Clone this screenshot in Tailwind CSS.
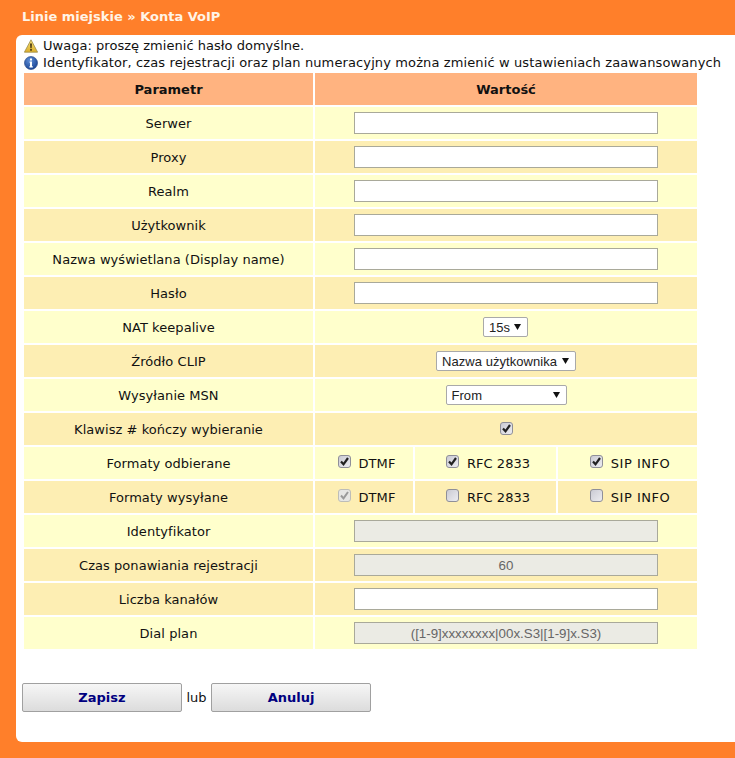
<!DOCTYPE html>
<html lang="pl">
<head>
  <meta charset="UTF-8">
  <title>Konta VoIP</title>
  <script src="https://cdn.jsdelivr.net/npm/@tailwindcss/browser@4"></script>
</head>
<body class="bg-[#ff7f2a] font-['DejaVu_Sans',sans-serif] text-[13px] text-[#111]">
  <svg class="absolute w-0 h-0">
    <defs>
      <linearGradient id="warn" x1="0" y1="0" x2="0" y2="1"><stop offset="0" stop-color="#f7e27a"/><stop offset="1" stop-color="#dcae2a"/></linearGradient>
      <radialGradient id="info" cx=".4" cy=".3" r=".8"><stop offset="0" stop-color="#5f8fd8"/><stop offset="1" stop-color="#123c8c"/></radialGradient>
      <linearGradient id="box" x1="0" y1="0" x2="1" y2="1"><stop offset="0" stop-color="#c9c9d2"/><stop offset="1" stop-color="#eeeef2"/></linearGradient>
    </defs>
  </svg>

  <h1 class="h-[35px] pl-[22px] pt-[8px] text-[13px] leading-[17px] font-bold text-[#fff4e6]">Linie miejskie » Konta VoIP</h1>

  <div class="ml-4 mb-4 h-[707px] bg-white rounded-l-md pl-[6px] pt-[2px]">
    <div class="flex items-center gap-[5px] h-[17px] pl-[2px] whitespace-nowrap tracking-[0.03px]">
      <svg class="w-[14px] h-[14px]" viewBox="0 0 14 14"><path d="M7 .8 13.600 13.200H.4z" fill="url(#warn)" stroke="#9a8a4a" stroke-width=".8" stroke-linejoin="round"/><path d="M6.100 4.500h1.800l-.3 4.800H6.400zM6.200 10h1.600v1.800H6.200z" fill="#3d2f10"/></svg>
      <span>Uwaga: proszę zmienić hasło domyślne.</span>
    </div>
    <div class="flex items-center gap-[5px] h-[17px] pl-[2px] whitespace-nowrap tracking-[0.12px]">
      <svg class="w-[14px] h-[14px]" viewBox="0 0 14 14"><circle cx="7" cy="7" r="6.500" fill="url(#info)" stroke="#1a3a7a" stroke-width=".6"/><path d="M6 2.600h2v2H6zM5.600 5.600H8v4.600h.8v1.200H5.400v-1.200H6V6.800h-.4z" fill="#fff"/></svg>
      <span>Identyfikator, czas rejestracji oraz plan numeracyjny można zmienić w ustawieniach zaawansowanych</span>
    </div>

    <table class="w-[677px] table-fixed border-separate border-spacing-[2px] text-center tracking-[0.05px]">
      <colgroup>
        <col class="w-[289px]"><col class="w-[98px]"><col class="w-[141px]"><col class="w-[139px]">
      </colgroup>
      <thead>
        <tr class="h-[32px] bg-[#ffb380]">
          <th class="font-bold tracking-normal pt-[1px]">Parametr</th>
          <th colspan="3" class="font-bold tracking-normal pt-[1px]">Wartość</th>
        </tr>
      </thead>
      <tbody class="[&>tr>td:first-child]:pt-[2px]">
        <tr class="h-[32px] bg-[#ffffcc]">
          <td>Serwer</td>
          <td colspan="3"><input type="text" class="block mx-auto w-[304px] h-[22px] bg-white border border-[#a9a99a]"></td>
        </tr>
        <tr class="h-[32px] bg-[#fdeeb3]">
          <td>Proxy</td>
          <td colspan="3"><input type="text" class="block mx-auto w-[304px] h-[22px] bg-white border border-[#a9a99a]"></td>
        </tr>
        <tr class="h-[32px] bg-[#ffffcc]">
          <td>Realm</td>
          <td colspan="3"><input type="text" class="block mx-auto w-[304px] h-[22px] bg-white border border-[#a9a99a]"></td>
        </tr>
        <tr class="h-[32px] bg-[#fdeeb3]">
          <td>Użytkownik</td>
          <td colspan="3"><input type="text" class="block mx-auto w-[304px] h-[22px] bg-white border border-[#a9a99a]"></td>
        </tr>
        <tr class="h-[32px] bg-[#ffffcc]">
          <td>Nazwa wyświetlana (Display name)</td>
          <td colspan="3"><input type="text" class="block mx-auto w-[304px] h-[22px] bg-white border border-[#a9a99a]"></td>
        </tr>
        <tr class="h-[32px] bg-[#fdeeb3]">
          <td>Hasło</td>
          <td colspan="3"><input type="password" class="block mx-auto w-[304px] h-[22px] bg-white border border-[#a9a99a]"></td>
        </tr>
        <tr class="h-[32px] bg-[#ffffcc]">
          <td>NAT keepalive</td>
          <td colspan="3">
            <div class="relative ml-[168px] w-[45px] h-[20px]">
              <select class="block appearance-none w-full h-full pl-[5px] bg-white border border-[#a9a9a9] rounded-[2px] font-['Liberation_Sans',sans-serif] text-[13px] text-[#222]"><option>15s</option></select>
              <svg class="absolute right-[7px] top-[7px] w-[7px] h-[6px]" viewBox="0 0 7 6"><path d="M0 0h7L3.500 6z" fill="#111"/></svg>
            </div>
          </td>
        </tr>
        <tr class="h-[32px] bg-[#fdeeb3]">
          <td>Źródło CLIP</td>
          <td colspan="3">
            <div class="relative mx-auto w-[140px] h-[20px]">
              <select class="block appearance-none w-full h-full pl-[5px] bg-white border border-[#a9a9a9] rounded-[2px] font-['Liberation_Sans',sans-serif] text-[13px] text-[#222]"><option>Nazwa użytkownika</option></select>
              <svg class="absolute right-[7px] top-[7px] w-[7px] h-[6px]" viewBox="0 0 7 6"><path d="M0 0h7L3.500 6z" fill="#111"/></svg>
            </div>
          </td>
        </tr>
        <tr class="h-[32px] bg-[#ffffcc]">
          <td>Wysyłanie MSN</td>
          <td colspan="3">
            <div class="relative mx-auto w-[121px] h-[20px]">
              <select class="block appearance-none w-full h-full pl-[5px] bg-white border border-[#a9a9a9] rounded-[2px] font-['Liberation_Sans',sans-serif] text-[13px] text-[#222]"><option>From</option></select>
              <svg class="absolute right-[7px] top-[7px] w-[7px] h-[6px]" viewBox="0 0 7 6"><path d="M0 0h7L3.500 6z" fill="#111"/></svg>
            </div>
          </td>
        </tr>
        <tr class="h-[32px] bg-[#fdeeb3]">
          <td>Klawisz # kończy wybieranie</td>
          <td colspan="3">
            <svg class="block mx-auto w-[13px] h-[13px] -mt-[2px]" viewBox="0 0 13 13"><rect x=".5" y=".5" width="12" height="12" rx="2.500" fill="url(#box)" stroke="#8f8f98"/><path d="M3 6.500l2.500 2.800L10 3" fill="none" stroke="#222" stroke-width="2.200"/></svg>
          </td>
        </tr>
        <tr class="h-[32px] bg-[#ffffcc]">
          <td>Formaty odbierane</td>
          <td>
            <div class="flex justify-center items-center gap-[8px] pl-[5px]">
              <svg class="w-[13px] h-[13px] -mt-[3px]" viewBox="0 0 13 13"><rect x=".5" y=".5" width="12" height="12" rx="2.500" fill="url(#box)" stroke="#8f8f98"/><path d="M3 6.500l2.500 2.800L10 3" fill="none" stroke="#222" stroke-width="2.200"/></svg>
              <span class="pt-[2px]">DTMF</span>
            </div>
          </td>
          <td>
            <div class="flex justify-center items-center gap-[8px] pl-[5px]">
              <svg class="w-[13px] h-[13px] -mt-[3px]" viewBox="0 0 13 13"><rect x=".5" y=".5" width="12" height="12" rx="2.500" fill="url(#box)" stroke="#8f8f98"/><path d="M3 6.500l2.500 2.800L10 3" fill="none" stroke="#222" stroke-width="2.200"/></svg>
              <span class="pt-[2px]">RFC 2833</span>
            </div>
          </td>
          <td>
            <div class="flex justify-center items-center gap-[8px] pl-[5px]">
              <svg class="w-[13px] h-[13px] -mt-[3px]" viewBox="0 0 13 13"><rect x=".5" y=".5" width="12" height="12" rx="2.500" fill="url(#box)" stroke="#8f8f98"/><path d="M3 6.500l2.500 2.800L10 3" fill="none" stroke="#222" stroke-width="2.200"/></svg>
              <span class="pt-[2px] tracking-[0.5px]">SIP INFO</span>
            </div>
          </td>
        </tr>
        <tr class="h-[32px] bg-[#fdeeb3]">
          <td>Formaty wysyłane</td>
          <td>
            <div class="flex justify-center items-center gap-[8px] pl-[5px]">
              <svg class="w-[13px] h-[13px] -mt-[3px]" viewBox="0 0 13 13"><rect x=".5" y=".5" width="12" height="12" rx="2.500" fill="#e6e6e4" stroke="#bdbdb8"/><path d="M3 6.500l2.500 2.800L10 3" fill="none" stroke="#9a9a9a" stroke-width="2"/></svg>
              <span class="pt-[2px]">DTMF</span>
            </div>
          </td>
          <td>
            <div class="flex justify-center items-center gap-[8px] pl-[5px]">
              <svg class="w-[13px] h-[13px] -mt-[3px]" viewBox="0 0 13 13"><rect x=".5" y=".5" width="12" height="12" rx="2.500" fill="url(#box)" stroke="#8f8f98"/></svg>
              <span class="pt-[2px]">RFC 2833</span>
            </div>
          </td>
          <td>
            <div class="flex justify-center items-center gap-[8px] pl-[5px]">
              <svg class="w-[13px] h-[13px] -mt-[3px]" viewBox="0 0 13 13"><rect x=".5" y=".5" width="12" height="12" rx="2.500" fill="url(#box)" stroke="#8f8f98"/></svg>
              <span class="pt-[2px] tracking-[0.5px]">SIP INFO</span>
            </div>
          </td>
        </tr>
        <tr class="h-[32px] bg-[#ffffcc]">
          <td>Identyfikator</td>
          <td colspan="3"><input type="text" disabled class="block mx-auto w-[304px] h-[22px] bg-[#ebebe4] border border-[#a9a99a]"></td>
        </tr>
        <tr class="h-[32px] bg-[#fdeeb3]">
          <td>Czas ponawiania rejestracji</td>
          <td colspan="3"><input type="text" disabled value="60" class="block mx-auto w-[304px] h-[22px] bg-[#ebebe4] border border-[#a9a99a] text-center font-['Liberation_Sans',sans-serif] text-[13.33px] tracking-normal text-[#666]"></td>
        </tr>
        <tr class="h-[32px] bg-[#fdeeb3]">
          <td>Liczba kanałów</td>
          <td colspan="3"><input type="text" class="block mx-auto w-[304px] h-[22px] bg-white border border-[#a9a99a]"></td>
        </tr>
        <tr class="h-[32px] bg-[#ffffcc]">
          <td>Dial plan</td>
          <td colspan="3"><input type="text" disabled value="([1-9]xxxxxxxx|00x.S3|[1-9]x.S3)" class="block mx-auto w-[304px] h-[22px] bg-[#ebebe4] border border-[#a9a99a] text-center font-['Liberation_Sans',sans-serif] text-[13.33px] tracking-normal text-[#666]"></td>
        </tr>
      </tbody>
    </table>

    <div class="flex items-center mt-[32px]">
      <button class="w-[160px] h-[29px] border border-[#a0a0a0] rounded-[2px] bg-linear-to-b from-[#f6f6f6] to-[#dcdcdc] font-bold text-[13px] text-[#000080]">Zapisz</button>
      <span class="w-[29px] text-center">lub</span>
      <button class="w-[160px] h-[29px] border border-[#a0a0a0] rounded-[2px] bg-linear-to-b from-[#f6f6f6] to-[#dcdcdc] font-bold text-[13px] text-[#000080]">Anuluj</button>
    </div>
  </div>
</body>
</html>
